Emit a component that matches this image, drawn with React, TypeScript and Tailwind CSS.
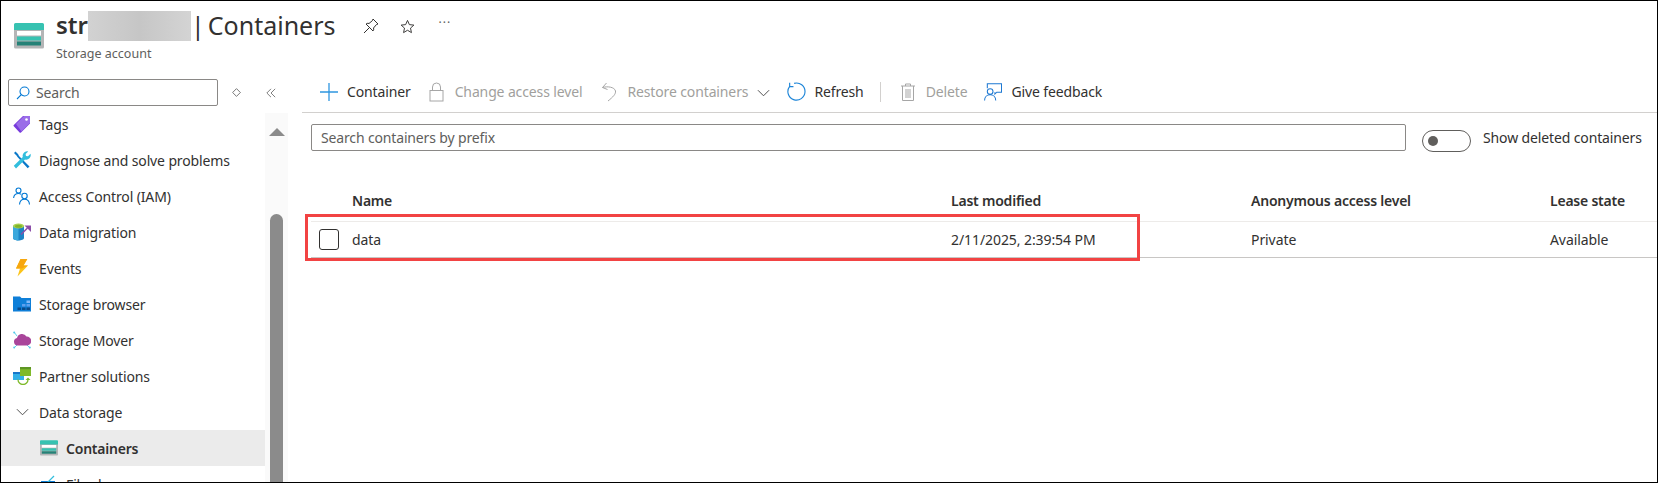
import type { FC, ReactNode } from "react";

const font = { fontFamily: '"Noto Sans", sans-serif' };

const StorageIcon: FC<{ className?: string }> = ({ className }) => (
  <svg viewBox="0 0 30 26" className={className}>
    <path d="M0 6h30v18a1.5 1.5 0 0 1-1.5 1.5h-27A1.500 1.500 0 0 1 0 24z" fill="#b4b5b6" />
    <path d="M1.500 0h27A1.500 1.500 0 0 1 30 1.500V7H0V1.500A1.500 1.500 0 0 1 1.500 0z" fill="#37c2b1" />
    <rect x="3" y="8" width="24" height="4.500" fill="#ffffff" />
    <rect x="3" y="13.500" width="24" height="4" fill="#37c2b1" />
    <rect x="3" y="18.500" width="24" height="4" fill="#258277" />
  </svg>
);

const TagIcon = () => (
  <svg viewBox="0 0 18 18" className="w-[18px] h-[18px]">
    <path d="M10 1h6a1 1 0 0 1 1 1v6.500L8 17.500a1 1 0 0 1-1.400 0L.8 11.300a1 1 0 0 1 0-1.400z" fill="#773adc" />
    <path d="M11 1h5a1 1 0 0 1 1 1v6L8.500 16.500 3 9z" fill="#9a6de8" />
    <circle cx="13.500" cy="4.500" r="1.300" fill="#ffffff" />
  </svg>
);

const WrenchIcon = () => (
  <svg viewBox="0 0 18 18" className="w-[18px] h-[18px]">
    <path d="M3.500 4.500 1 2 2.500.5 5 3l1 2 10.500 10.500-1.800 1.800L4.500 6z" fill="#0a78c9" />
    <path d="M17.500 2.800 15 5.300l-2-.4-.4-2L15.200.5a4.500 4.500 0 0 0-5.400 5.600L.8 14.800 3 17.500l9-9a4.500 4.500 0 0 0 5.500-5.700z" fill="#32bedd" />
  </svg>
);

const PeopleIcon = () => (
  <svg viewBox="0 0 18 18" className="w-[18px] h-[18px]" fill="none" stroke="#0078d4" strokeWidth="1.100">
    <circle cx="5.500" cy="3.500" r="2.500" />
    <path d="M.6 11c.3-3 2.300-4.500 4.900-4.500 1 0 1.900.2 2.600.7" />
    <circle cx="11.500" cy="9" r="2.700" />
    <path d="M6.500 17.500c.2-3.300 2.300-5.300 5-5.300s4.800 2 5 5.300" />
  </svg>
);

const MigrationIcon = () => (
  <svg viewBox="0 0 18 18" className="w-[18px] h-[18px]">
    <path d="M0 3v12c0 1.500 2.600 2.500 5.500 2.500s5.500-1 5.500-2.500V3z" fill="#1c84c6" />
    <path d="M0 3v12c0 1.500 2.600 2.500 5.500 2.500V3z" fill="#3ba8dc" />
    <ellipse cx="5.500" cy="3" rx="5.500" ry="2.500" fill="#a9d14f" />
    <ellipse cx="5.500" cy="3.300" rx="3.500" ry="1.500" fill="#7fb42b" />
    <path d="M8 11.500 14.500 5" stroke="#8c4ea8" strokeWidth="1.500" />
    <path d="M11.500 2.500H18V9z" fill="#8c4ea8" />
  </svg>
);

const BoltIcon = () => (
  <svg viewBox="0 0 18 18" className="w-[18px] h-[18px]">
    <path d="M7.500 0h6.800L10.500 6.500H15L4.500 17.500 7 9.500H3z" fill="#fcc419" />
    <path d="M7.500 0h6.800L10.500 6.500H15L9 9.500H3z" fill="#f7a70f" />
  </svg>
);

const BrowserIcon = () => (
  <svg viewBox="0 0 18 18" className="w-[18px] h-[18px]">
    <path d="M0 1.500h7L8.500 3H18v13.500H0z" fill="#0f7fd8" />
    <rect x="9" y="12.500" width="3.500" height="2.500" fill="#0a4a8a" />
    <rect x="13.500" y="12.500" width="3.500" height="2.500" fill="#0a4a8a" />
    <rect x="4.500" y="12.500" width="3.500" height="2.500" fill="#0a4a8a" />
    <rect x="9" y="9" width="3.500" height="2.500" fill="#5ea0ef" />
    <rect x="13.500" y="5.500" width="3.500" height="2.500" fill="#83b9f9" />
    <rect x="13.500" y="9" width="3.500" height="2.500" fill="#5ea0ef" />
  </svg>
);

const MoverIcon = () => (
  <svg viewBox="0 0 18 18" className="w-[18px] h-[18px]">
    <path d="M1 1l3 4M17 17l-3-3M1 17l3-3" stroke="#50c8e8" strokeWidth="0.900" />
    <path d="M4.500 14.500a3.800 3.800 0 0 1-.5-7.500A5.200 5.200 0 0 1 13.500 5.500a4.500 4.500 0 0 1 .5 9z" fill="#a9459a" />
    <circle cx="1.200" cy="1.500" r="1" fill="#50c8e8" />
    <circle cx="1.200" cy="16.500" r="1" fill="#50c8e8" />
    <circle cx="16.800" cy="16.500" r="1" fill="#50c8e8" />
  </svg>
);

const PartnerIcon = () => (
  <svg viewBox="0 0 18 18" className="w-[18px] h-[18px]">
    <rect x="0" y="5" width="11" height="8" fill="#32b0e7" />
    <rect x="0" y="5" width="11" height="2" fill="#1877c9" />
    <rect x="7" y="0" width="11" height="9" fill="#7fba2a" />
    <rect x="7" y="0" width="11" height="2.200" fill="#5e9624" />
    <path d="M5 12.500a5 5 0 0 0 10 0" stroke="#7fba2a" strokeWidth="1.300" fill="none" />
    <path d="M12.500 13 15 10.500l2.500 2.500z" fill="#7fba2a" />
  </svg>
);

const FileShareIcon = () => (
  <svg viewBox="0 0 18 18" className="w-[18px] h-[18px]">
    <path d="M1 6h14v11H1z" fill="#0f7fd8" />
    <path d="M7 8 14 1" stroke="#32bedd" strokeWidth="1.200" />
  </svg>
);

const Chevron: FC<{ className?: string; color?: string }> = ({ className, color = "#444" }) => (
  <svg viewBox="0 0 14 8" className={className} fill="none" stroke={color} strokeWidth="1">
    <path d="M1 1l6 6 6-6" />
  </svg>
);

const navItems: { label: string; icon: ReactNode }[] = [
  { label: "Tags", icon: <TagIcon /> },
  { label: "Diagnose and solve problems", icon: <WrenchIcon /> },
  { label: "Access Control (IAM)", icon: <PeopleIcon /> },
  { label: "Data migration", icon: <MigrationIcon /> },
  { label: "Events", icon: <BoltIcon /> },
  { label: "Storage browser", icon: <BrowserIcon /> },
  { label: "Storage Mover", icon: <MoverIcon /> },
  { label: "Partner solutions", icon: <PartnerIcon /> },
  { label: "Data storage", icon: <Chevron className="w-[13px] h-[8px]" /> },
];

const Sidebar = () => (
  <aside className="w-[287px] shrink-0 flex flex-col min-h-0">
    <div className="flex items-center h-[27px] pl-[7px]">
      <div className="w-[210px] h-[27px] border border-[#8a8886] rounded-[2px] flex items-center pl-[7px]">
        <svg viewBox="0 0 14 14" className="w-[14px] h-[14px]" fill="none" stroke="#0078d4" strokeWidth="1.100">
          <circle cx="8.500" cy="5.500" r="4.500" />
          <path d="M5.300 8.700 1 13" />
        </svg>
        <span className="ml-[6px] text-[14px] tracking-[-0.13px] text-[#605e5c]">Search</span>
      </div>
      <svg viewBox="0 0 10 10" className="w-[9px] h-[9px] ml-[14px]" fill="none" stroke="#444" strokeWidth="0.800">
        <path d="M5 .7 9.300 5 5 9.300.7 5z" />
      </svg>
      <svg viewBox="0 0 12 12" className="w-[10px] h-[10px] ml-[25px]" fill="none" stroke="#555" strokeWidth="0.900">
        <path d="M6 1 1 6l5 5M11 1 6 6l5 5" />
      </svg>
    </div>
    <div className="flex flex-1 min-h-0 overflow-hidden">
      <div className="w-[264px] shrink-0 tracking-[-0.13px]">
        {navItems.map((item) => (
          <div key={item.label} className="flex items-center h-[36px] pl-[12px] text-[14px] text-[#323130]">
            <span className="w-[18px] flex justify-center shrink-0">{item.icon}</span>
            <span className="ml-[8px] whitespace-nowrap">{item.label}</span>
          </div>
        ))}
        <div className="flex items-center h-[36px] pl-[39px] bg-[#ebebeb] text-[14px] font-semibold tracking-[-0.22px] text-[#323130]">
          <StorageIcon className="w-[18px] h-[16px]" />
          <span className="ml-[8px]">Containers</span>
        </div>
        <div className="flex items-center h-[36px] pl-[39px] text-[14px] text-[#323130]">
          <FileShareIcon />
          <span className="ml-[8px]">File shares</span>
        </div>
      </div>
      <div className="w-[23px] shrink-0 mt-[7px] bg-[#fafafa] flex flex-col items-center">
        <div className="w-0 h-0 mt-[15px] border-x-[8px] border-x-transparent border-b-[8px] border-b-[#8b8b8b]" />
        <div className="w-[13px] flex-1 mt-[78px] rounded-t-[7px] bg-[#8b8b8b]" />
      </div>
    </div>
  </aside>
);

const ToolButton: FC<{ icon: ReactNode; label: string; disabled?: boolean; after?: ReactNode; className?: string }> = ({
  icon,
  label,
  disabled,
  after,
  className,
}) => (
  <div className={`flex items-center ${className ?? ""}`}>
    {icon}
    <span className={`whitespace-nowrap text-[14px] tracking-[-0.13px] ${disabled ? "text-[#a19f9d]" : "text-[#323130]"}`}>{label}</span>
    {after}
  </div>
);

const Toolbar = () => (
  <div className="flex items-center h-[42px] pl-[18px] border-b border-[#d2d0ce]">
    <ToolButton
      icon={
        <svg viewBox="0 0 18 18" className="w-[18px] h-[18px] mr-[9px]" stroke="#2f96e0" strokeWidth="1.300">
          <path d="M9 0v18M0 9h18" />
        </svg>
      }
      label="Container"
    />
    <ToolButton
      className="ml-[18px]"
      disabled
      icon={
        <svg viewBox="0 0 15 20" className="w-[15px] h-[20px] mr-[11px]" fill="none" stroke="#a6a6a6" strokeWidth="1">
          <rect x="1" y="8.500" width="13" height="10.500" />
          <path d="M3.500 8.500V5a4 4 0 0 1 8 0v3.500" />
        </svg>
      }
      label="Change access level"
    />
    <ToolButton
      className="ml-[19px]"
      disabled
      icon={
        <svg viewBox="0 0 16 20" className="w-[16px] h-[20px] mr-[10px]" fill="none" stroke="#a6a6a6" strokeWidth="1">
          <path d="M5.500 1 1.500 5.500l5 2" />
          <path d="M1.500 5.500c5-1.500 12-.5 13 3.500.5 3-2.500 6-7.500 10" />
        </svg>
      }
      label="Restore containers"
      after={<Chevron className="w-[13px] h-[8px] ml-[9px] mt-[2px]" />}
    />
    <ToolButton
      className="ml-[17px]"
      icon={
        <svg viewBox="0 0 20 20" className="w-[19px] h-[19px] mr-[8px]" fill="none" stroke="#1d85d8" strokeWidth="1.200">
          <path d="M7.500 1.400A9 9 0 1 1 2.800 4.600" />
          <path d="M2.800.8v4h4" />
        </svg>
      }
      label="Refresh"
    />
    <div className="w-px h-[20px] bg-[#d2d0ce] ml-[16px]" />
    <ToolButton
      className="ml-[20px]"
      disabled
      icon={
        <svg viewBox="0 0 14 18" className="w-[14px] h-[18px] mr-[11px]" fill="none" stroke="#a6a6a6" strokeWidth="1">
          <path d="M0 3h14M4.500 3V1h5v2M1.500 3v14.500h11V3M5 6v9M7 6v9M9 6v9" />
        </svg>
      }
      label="Delete"
    />
    <ToolButton
      className="ml-[17px]"
      icon={
        <svg viewBox="0 0 19 19" className="w-[18px] h-[18px] mr-[9px]" fill="none" stroke="#1d78d2" strokeWidth="1.100">
          <path d="M3.500 5.500V.7h15v9h-5l-2 2v-2" />
          <circle cx="6.500" cy="9" r="3" />
          <path d="M.6 18.500c0-3.500 2.500-6 5.900-6s5.900 2.500 5.900 6" />
        </svg>
      }
      label="Give feedback"
    />
  </div>
);

const columns = "grid grid-cols-[599px_300px_299px_1fr]";

const Table = () => (
  <div className="relative mt-[39px] ml-[9px] text-[14px]">
    <div className={`${columns} items-center h-[31px] pb-[10px] pl-[41px] font-semibold tracking-[-0.22px] text-[#323130]`}>
      <span>Name</span>
      <span>Last modified</span>
      <span>Anonymous access level</span>
      <span>Lease state</span>
    </div>
    <div className="flex items-center h-[37px] border-y border-t-[#edebe9] border-b-[#c8c6c4] text-[#323130] tracking-[-0.08px]">
      <div className="w-[20px] h-[21px] ml-[8px] mr-[13px] shrink-0 border border-[#323130] rounded-[3px]" />
      <div className={`${columns} flex-1`}>
        <span>data</span>
        <span>2/11/2025, 2:39:54 PM</span>
        <span>Private</span>
        <span>Available</span>
      </div>
    </div>
    <div className="absolute left-[-6px] top-[24px] w-[835px] h-[47px] border-[3px] border-[#f24343] pointer-events-none" />
  </div>
);

const Main = () => (
  <main className="flex-1 min-w-0 pl-[14px] -mt-[8px]">
    <Toolbar />
    <div className="flex items-start h-[27px] mt-[11px] ml-[9px]">
      <div className="w-[1095px] h-[27px] border border-[#8a8886] rounded-[2px] flex items-center pl-[9px] text-[14px] tracking-[-0.15px] text-[#605e5c]">
        Search containers by prefix
      </div>
      <div className="w-[49px] h-[22px] ml-[16px] mt-[6px] border border-[#605e5c] rounded-full flex items-center pl-[5px]">
        <div className="w-[10px] h-[10px] rounded-full bg-[#605e5c]" />
      </div>
      <span className="ml-[12px] mt-[3px] text-[14px] tracking-[-0.13px] text-[#323130] whitespace-nowrap">Show deleted containers</span>
    </div>
    <Table />
  </main>
);

export default function App() {
  return (
    <div style={font} className="w-[1658px] h-[483px] border border-black bg-white overflow-hidden flex flex-col">
      <header className="flex h-[78px] shrink-0 pl-[13px] pt-[10px]">
        <StorageIcon className="w-[30px] h-[26px] mt-[12px]" />
        <div className="ml-[12px]">
          <div className="flex items-center h-[30px]">
            <span className="text-[24px] font-semibold text-[#323130] leading-none -mt-[2px]">str</span>
            <div className="w-[103px] h-[30px] bg-gradient-to-r from-[#d2d2d2] via-[#c6c6c6] to-[#d4d4d4]" />
            <span className="text-[25px] text-[#323130] leading-none -mt-[2px]">|</span>
            <span className="ml-[3px] text-[25px] text-[#323130] leading-none whitespace-nowrap -mt-[2px]">Containers</span>
            <svg viewBox="0 0 16 16" className="w-[16px] h-[16px] ml-[27px]" fill="none" stroke="#323130" strokeWidth="1">
              <path d="M10 1 15 6 13.500 6.500 10.500 10c.5 1.500 0 2.500-.5 3L3 6c.5-.5 1.500-1 3-.5L9.500 2.500zM6 10l-5 5" />
            </svg>
            <svg viewBox="0 0 16 16" className="w-[15px] h-[15px] ml-[21px]" fill="none" stroke="#323130" strokeWidth="1">
              <path d="M8 1.500 10 6l4.800.5-3.600 3.200 1 4.800L8 12l-4.200 2.500 1-4.800L1.200 6.500 6 6z" />
            </svg>
            <span className="ml-[24px] mb-[6px] text-[12px] tracking-[1px] text-[#605e5c] leading-none">···</span>
          </div>
          <div className="text-[12.500px] text-[#605e5c] mt-[4px]">Storage account</div>
        </div>
      </header>
      <div className="flex flex-1 min-h-0">
        <Sidebar />
        <Main />
      </div>
    </div>
  );
}
